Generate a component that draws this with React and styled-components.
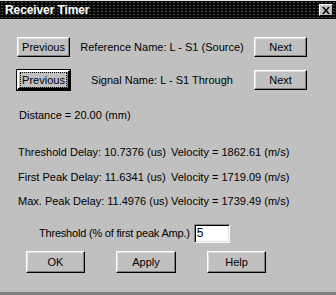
import styled, { createGlobalStyle, css } from "styled-components";

const GlobalStyle = createGlobalStyle`
  html, body {
    margin: 0;
    padding: 0;
    background: #c0c0c0;
  }
  * {
    box-sizing: border-box;
  }
`;

const results = [
  { label: "Threshold Delay: 10.7376 (us)", velocity: "Velocity = 1862.61 (m/s)" },
  { label: "First Peak Delay: 11.6341 (us)", velocity: "Velocity = 1719.09 (m/s)" },
  { label: "Max. Peak Delay: 11.4976 (us)", velocity: "Velocity = 1739.49 (m/s)" },
];

const App = () => {
  return (
    <>
      <GlobalStyle />
      <Window>
        <TitleBar>
          <Title>Receiver Timer</Title>
          <CloseButton>
            <svg width="8" height="7" viewBox="0 0 8 7">
              <path d="M0 0h2l2 2.5L6 0h2L5 3.5 8 7H6L4 4.5 2 7H0l3-3.5z" fill="#000" />
            </svg>
          </CloseButton>
        </TitleBar>

        <Body>
          <NavGrid>
            <Button $w={53}>Previous</Button>
            <NavLabel>Reference Name: L - S1 (Source)</NavLabel>
            <Button $w={53}>Next</Button>

            <Button $w={53} $default>
              <Focus>Previous</Focus>
            </Button>
            <NavLabel>Signal Name: L - S1 Through</NavLabel>
            <Button $w={53}>Next</Button>
          </NavGrid>

          <Distance>Distance = 20.00 (mm)</Distance>

          <Results>
            {results.map((r) => (
              <ResultRow key={r.label}>
                <span>{r.label}</span>
                <span>{r.velocity}</span>
              </ResultRow>
            ))}
          </Results>

          <ThresholdRow>
            <ThresholdLabel>Threshold (% of first peak Amp.)</ThresholdLabel>
            <Field defaultValue="5" />
          </ThresholdRow>

          <Actions>
            <Button $w={59} $h={22}>OK</Button>
            <Button $w={60} $h={22}>Apply</Button>
            <Button $w={59} $h={22}>Help</Button>
          </Actions>
        </Body>
      </Window>
    </>
  );
};

const Window = styled.div`
  width: 336px;
  height: 295px;
  background: #c0c0c0;
  border-top: 1px solid #dfdfdf;
  border-bottom: 3px solid #808080;
  font-family: "Liberation Sans", Arial, sans-serif;
  font-size: 11px;
  color: #000;
  display: flex;
  flex-direction: column;
`;

const TitleBar = styled.div`
  height: 18px;
  display: flex;
  align-items: center;
  justify-content: space-between;
  padding: 0 3px 0 5px;
  background-color: #080808;
  background-image: radial-gradient(#4a4a4a 0.5px, transparent 0.7px);
  background-size: 4px 3px;
`;

const Title = styled.span`
  color: #fff;
  font-weight: bold;
  font-size: 12px;
  letter-spacing: -0.1px;
`;

const CloseButton = styled.div`
  width: 14px;
  height: 12px;
  display: flex;
  align-items: center;
  justify-content: center;
  background: #c0c0c0;
  border-top: 1px solid #fff;
  border-left: 1px solid #fff;
  border-right: 1px solid #000;
  border-bottom: 1px solid #000;
`;

const Body = styled.div`
  flex: 1;
  display: flex;
  flex-direction: column;
  padding: 18px 29px 0 17px;
`;

const NavGrid = styled.div`
  display: grid;
  grid-template-columns: 53px 1fr 53px;
  row-gap: 13px;
  align-items: center;
`;

const NavLabel = styled.span`
  text-align: center;
  white-space: nowrap;
`;

const raised = css`
  border-top: 1px solid #fff;
  border-left: 1px solid #fff;
  border-right: 1px solid #000;
  border-bottom: 1px solid #000;
  box-shadow: inset -1px -1px 0 #808080, inset 1px 1px 0 #dfdfdf;
`;

const Button = styled.button`
  width: ${(p) => p.$w}px;
  height: ${(p) => p.$h || 20}px;
  padding: 0;
  display: flex;
  align-items: center;
  justify-content: center;
  background: #c0c0c0;
  font-family: inherit;
  font-size: 11px;
  color: #000;
  ${raised}
  ${(p) =>
    p.$default &&
    css`
      outline: 1px solid #000;
      outline-offset: 0;
      box-shadow: inset -1px -1px 0 #000, inset 1px 1px 0 #fff, inset -2px -2px 0 #808080;
    `}
`;

const Focus = styled.span`
  padding: 1px 1px;
  border: 1px dotted #000;
  line-height: 12px;
`;

const Distance = styled.div`
  margin-top: 18px;
  padding-left: 2px;
  line-height: 14px;
`;

const Results = styled.div`
  margin-top: 18px;
  display: flex;
  flex-direction: column;
`;

const ResultRow = styled.div`
  display: grid;
  grid-template-columns: 153px auto;
  height: 24.5px;
  align-items: center;
  padding-left: 1px;
  white-space: nowrap;
`;

const ThresholdRow = styled.div`
  margin-top: 10px;
  display: flex;
  align-items: center;
  gap: 4px;
  padding-left: 22px;
`;

const ThresholdLabel = styled.span`
  white-space: nowrap;
  letter-spacing: -0.2px;
`;

const Field = styled.input`
  width: 36px;
  height: 19px;
  padding: 0 2px;
  background: #fff;
  font-family: inherit;
  font-size: 12px;
  color: #000;
  border-top: 1px solid #808080;
  border-left: 1px solid #808080;
  border-right: 1px solid #fff;
  border-bottom: 1px solid #fff;
  box-shadow: inset 1px 1px 0 #000, inset -1px -1px 0 #dfdfdf;
  outline: none;
`;

const Actions = styled.div`
  margin-top: 8px;
  display: flex;
  gap: 31px;
  padding-left: 9px;
`;

export default App;
